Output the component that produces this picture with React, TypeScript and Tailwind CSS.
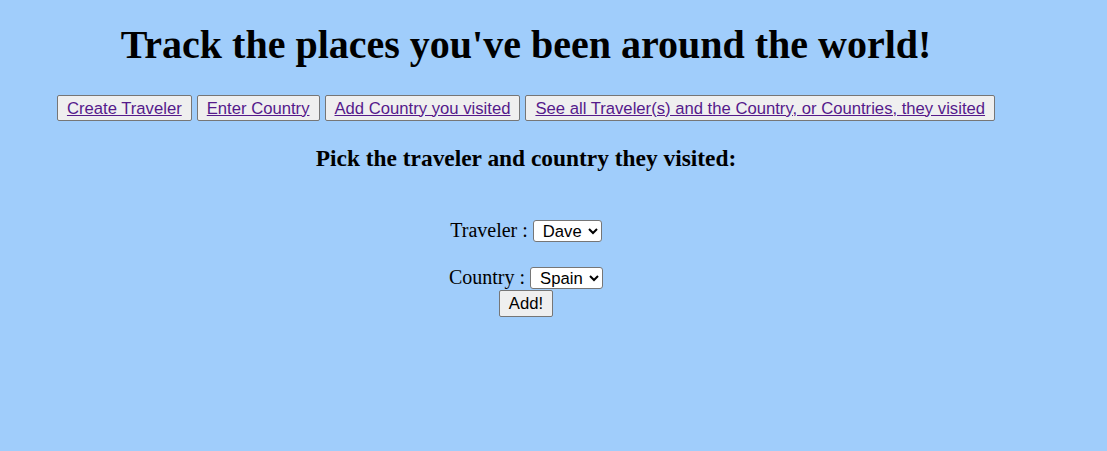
import React from 'react';

const links = [
  'Create Traveler',
  'Enter Country',
  'Add Country you visited',
  'See all Traveler(s) and the Country, or Countries, they visited',
];

function NavButton({ label }: { label: string }) {
  return (
    <button className="h-[26px] px-[9px] bg-[#efefef] border border-[#767676] rounded-[2px] font-['Liberation_Sans',sans-serif] text-[16.67px] leading-[19px]">
      <a href="#" className="text-[#551a8b] underline">
        {label}
      </a>
    </button>
  );
}

function Picker({ label, value, className = '' }: { label: string; value: string; className?: string }) {
  return (
    <div className={`flex items-center gap-[5px] text-[20px] leading-[23px] ${className}`}>
      <label>{label}</label>
      <select className="h-[22px] pl-[5px] pr-[3px] bg-white border border-[#767676] rounded-[3px] font-['Liberation_Sans',sans-serif] text-[16.67px] leading-[19px]">
        <option>{value}</option>
      </select>
    </div>
  );
}

export default function App() {
  return (
    <div className="min-h-[451px] bg-[#a0cdfb] text-black font-['Liberation_Serif',serif]">
      <div className="w-[1052px] text-center">
        <h1 className="pt-[22px] text-[40px] font-bold leading-[46px]">
          Track the places you've been around the world!
        </h1>

        {/* navigation */}
        <div className="mt-[27px] flex justify-center gap-[5px]">
          {links.map((l) => (
            <NavButton key={l} label={l} />
          ))}
        </div>

        <h3 className="mt-[24px] text-[23.4px] font-bold leading-[27px]">
          Pick the traveler and country they visited:
        </h3>

        <form className="mt-[47px] flex flex-col items-center">
          <Picker label="Traveler :" value="Dave" />
          <Picker label="Country :" value="Spain" className="mt-[24px]" />
          <button
            type="button"
            className="mt-[1px] h-[27px] px-[9px] bg-[#efefef] border border-[#767676] rounded-[2px] font-['Liberation_Sans',sans-serif] text-[16.67px]"
          >
            Add!
          </button>
        </form>
      </div>
    </div>
  );
}
